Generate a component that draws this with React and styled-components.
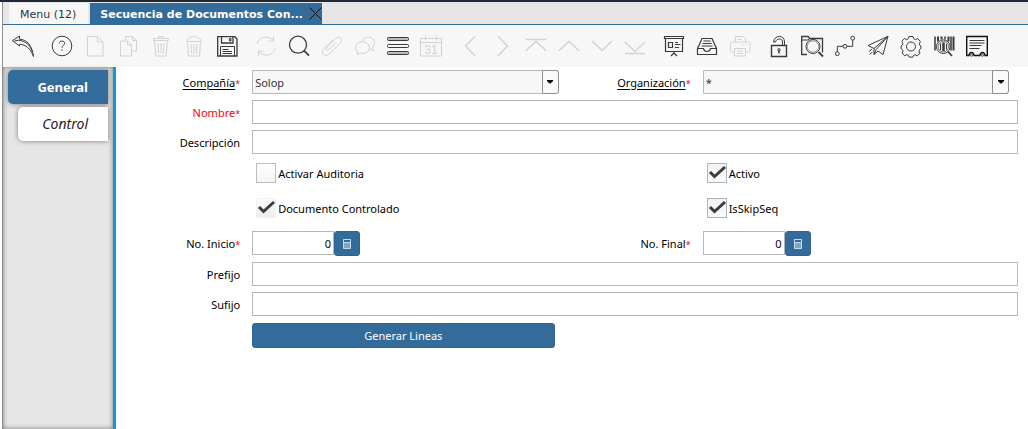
import React from "react";
import styled, { createGlobalStyle, css } from "styled-components";

const GlobalStyle = createGlobalStyle`
  *, *::before, *::after { box-sizing: border-box; }
  body {
    margin: 0;
    background: #fff;
    color: #000;
    font: 12px/16px "Noto Sans", "Open Sans", sans-serif;
  }
  button, input, select { margin: 0; font: inherit; color: inherit; }
`;

const blue = "#336b9b";
const line = "#b7b7b7";

const Page = styled.div`
  display: flex;
  flex-direction: column;
  min-height: 100vh;
  border-top: 2px solid #1f2936;
  padding-left: 2px;
`;

const Frame = styled.div`
  flex: 1;
  display: flex;
  flex-direction: column;
  border-left: 1px solid #8e8e8e;
`;

const TabBar = styled.nav`
  display: flex;
  gap: 2px;
  padding: 1px 6px 0;
  background: #e6e6e6;
  border-bottom: 1px solid ${blue};
  font: 11px/21px "DejaVu Sans", sans-serif;
`;

const WindowTab = styled.div`
  display: flex;
  align-items: center;
  height: 21px;
  padding: ${(p) => (p.$active ? "0 0 0 10px" : "0 12px 0 11px")};
  background: ${(p) => (p.$active ? blue : "#f7f7f7")};
`;

const TabButton = styled.button`
  border: 0;
  padding: 1px 0 0;
  background: none;
  white-space: nowrap;
  color: ${(p) => (p.$active ? "#fff" : "#333")};
  font-weight: ${(p) => (p.$active ? "bold" : "normal")};
`;

const CloseButton = styled.button`
  display: flex;
  margin-left: 6px;
  border: 0;
  padding: 0;
  background: none;
  color: #111;
`;

const Toolbar = styled.div`
  display: flex;
  gap: 6px;
  padding: 9px 3px 8px;
  background: #f7f7f7;
`;

const ToolGroup = styled.div`
  display: flex;
`;

const ToolButton = styled.button`
  display: flex;
  border: 0;
  padding: 0 4px;
  background: none;
  color: #3a3a3a;
  &:disabled { color: #d2d2d2; }
`;

const Body = styled.div`
  flex: 1;
  display: flex;
`;

const Sidebar = styled.nav`
  flex: none;
  display: flex;
  flex-direction: column;
  align-items: flex-end;
  gap: 3px;
  width: 113px;
  padding: 3px 5px;
  background: #e6e6e6;
  border-right: 3px solid #0a9bdc;
  box-shadow: inset 0 0 5px #777;
`;

const SideTab = styled.button`
  width: ${(p) => (p.$active ? "100px" : "90px")};
  height: 34px;
  border: 0;
  border-radius: 5px 0 0 5px;
  padding: 0 20px 0 0;
  text-align: right;
  font-size: ${(p) => (p.$active ? "13px" : "14px")};
  box-shadow: 0 0 5px #777;
  background: ${(p) => (p.$active ? blue : "#fff")};
  color: ${(p) => (p.$active ? "#fff" : "#222")};
  font-weight: ${(p) => (p.$active ? "bold" : "normal")};
  font-style: ${(p) => (p.$active ? "normal" : "italic")};
`;

const columns = css`
  display: grid;
  grid-template-columns: 15fr 35fr 15fr 35fr;
`;

const Form = styled.form`
  ${columns}
  flex: 1;
  align-content: start;
  align-items: center;
  row-gap: 6px;
  padding: 3px 10px 3px 1px;
  font-size: 11px;
`;

const Label = styled.label`
  padding: 2px 12px 0 0;
  text-align: right;
  white-space: nowrap;
  color: ${(p) => (p.$missing ? "#f00" : "#000")};
`;

const LabelText = styled.span`
  text-decoration: ${(p) => (p.$linked ? "underline" : "none")};
  text-underline-offset: 2px;
`;

const Star = styled.span`
  color: #f00;
  font-size: 9px;
`;

const TextBox = styled.input`
  grid-column: span 3;
  width: 100%;
  height: 24px;
  border: 1px solid ${line};
  padding: 0 4px;
  background: #fff;
`;

const Combo = styled.div`
  position: relative;
  margin-right: 9px;
`;

const Select = styled.select`
  display: block;
  appearance: none;
  width: 100%;
  height: 24px;
  border: 1px solid ${line};
  border-radius: 0 3px 3px 0;
  padding: 2px 20px 0 2px;
  background: #f7f7f7;
  color: #333;
`;

const ComboArrow = styled.span`
  position: absolute;
  top: 0;
  right: 0;
  display: flex;
  align-items: center;
  justify-content: center;
  width: 17px;
  height: 24px;
  border: 1px solid #8f8f8f;
  border-radius: 0 3px 3px 0;
  background: #fafafa;
  pointer-events: none;
`;

const CheckGroup = styled.div`
  ${columns}
  grid-column: 1 / -1;
  row-gap: 15px;
  padding: 3px 0 7px;
`;

const CheckLabel = styled.label`
  grid-column: ${(p) => (p.$right ? 4 : 2)};
  display: flex;
  align-items: center;
  gap: 2px;
  margin-left: 4px;
`;

const CheckText = styled.span`
  padding-top: 2px;
`;

const CheckBox = styled.span`
  display: grid;
  width: 20px;
  height: 20px;
  > * { grid-area: 1 / 1; }
  > svg { pointer-events: none; visibility: hidden; }
  > input:checked + svg { visibility: visible; }
`;

const CheckInput = styled.input`
  appearance: none;
  width: 20px;
  height: 20px;
  border: 1px solid #b9bcc0;
  background: linear-gradient(#fff, #f3f3f3);
  &:checked { border-color: #a9b5c0; background: linear-gradient(#f2f2f2, #fafafa); }
  &:disabled { border-color: #f2f2f2; background: linear-gradient(#fafafa, #ededed); }
`;

const NumberField = styled.div`
  display: flex;
  align-items: flex-start;
`;

const NumberBox = styled.input`
  width: 82px;
  height: 24px;
  border: 1px solid ${line};
  padding: 1px 2px 0 3px;
  text-align: right;
`;

const CalcButton = styled.button`
  display: flex;
  align-items: center;
  justify-content: center;
  width: 26px;
  height: 25px;
  border: 1px solid #2c6595;
  border-radius: 3px;
  padding: 0;
  background: ${blue};
  color: #c4dcef;
`;

const ActionButton = styled.button`
  grid-column: 2;
  height: 25px;
  margin: 1px 13px 0 0;
  border: 1px solid #2c6595;
  border-radius: 3px;
  padding: 0;
  background: ${blue};
  color: #fff;
`;

const icons = {
  undo: <path d="M2.500 6.700 9.500 2v3.200C17 5.400 22.400 12 23.500 22.500 20.700 15 16 10.500 9.500 10.300V12ZM4.500 7l4-.8C15.500 7 20 11 22.300 17.500" />,
  help: <><circle cx="13" cy="12" r="9.800" /><path d="M10.300 9.500C10.300 6.300 15.700 6.300 15.700 9.300 15.700 11.400 13 11.300 13 13.700M13 15.300v1.500" /></>,
  file: <path d="M5.500 2.500h10l5.500 5.500v14H5.500ZM15.500 2.500V8H21" />,
  copy: <path d="M10.500 6.500v-4h7l4 4v10.500h-5M17.500 2.500v4h4M5.500 7h7l4 4v11h-11ZM12.500 7v4h4" />,
  trash: <path d="M5.500 4.500h15v2h-15ZM10.500 4.500v-2h5v2M6.500 6.500 8 22h10l1.500-15.500M10 9l.7 10.500M13 9v10.500M16 9l-.7 10.500" />,
  trashFull: <path d="M6.500 7.500h13l-1 14.500h-11ZM6 7.500C5.500 5 7.500 4 9 4.500 10 2 12 1.500 13 3.500 15 1.500 17 3 17 4.500 19 4 20.500 5.500 20 7.500M10 10l.5 9.500M13 10v9.500M16 10l-.5 9.500" />,
  save: <><path strokeWidth="1.300" d="M3.700 2.700h17.200L23 5v17H3.700ZM7.500 3v6h11.500V3" /><path d="M15.500 4.500h1.500v2.500h-1.500ZM6.500 21.700v-9.200h14v9.200" /><path strokeWidth="1.200" d="M8.500 15.500h6M8.500 17.500h9.500M8.500 19.500h9.500" /></>,
  refresh: <path d="M4 10C5.500 3 15 .5 20.500 6.500M20.500 2.500v4.500h-5M22.500 14C20.500 21.500 11 23.500 5.500 17.500M5.500 22v-5h5" />,
  search: <><circle cx="12" cy="10.700" r="8.500" strokeWidth="1.300" /><path strokeWidth="1.700" d="m18 16.700 5 5" /></>,
  clip: <path d="M17.500 8 10 15.500C8 17.500 6 15.500 7.800 13.500L16.500 4.500C20 1 24.700 5.500 21.300 9L10.300 20C6 24.300 .8 19 4.800 14.700L13.500 6" />,
  chat: <path d="M10 7.500C11 1.500 22.500 1.500 22.500 8.500 22.500 11 21.500 12 20.500 13l1 3.500-4-2M3.500 13.500C3.500 6 17.500 6 17.500 13.500 17.500 18.500 12.500 20.500 8.500 19L5 20.500 5.800 17.500C4.300 16.500 3.500 15.500 3.500 13.500Z" />,
  bars: <><g fill="#bbb"><rect x="2.500" y="3.500" width="21" height="3" rx="1" /><rect x="2.500" y="17.500" width="21" height="3" rx="1" /></g><rect x="2.500" y="10.500" width="21" height="3" rx="1" /></>,
  calendar: <><path d="M2.500 4.500h21v17.500h-21ZM2.500 8.500h21M7.500 2v4.500M18.500 2v4.500" /><text x="13" y="20" textAnchor="middle" fontFamily="Liberation Sans, sans-serif" fontSize="12" fill="currentColor" stroke="none">31</text></>,
  left: <path strokeWidth="1.400" d="M18 2.300 8.500 12 18 21.700" />,
  right: <path strokeWidth="1.400" d="M8 2.300 17.500 12 8 21.700" />,
  first: <path strokeWidth="1.400" d="M3 5.500h20M3 16.700 13 7.200l10 9.500" />,
  up: <path strokeWidth="1.400" d="M3 16.700 13 7.200l10 9.500" />,
  down: <path strokeWidth="1.400" d="M3 7l10 9.500L23 7" />,
  last: <path strokeWidth="1.400" d="M3 8l10 9.500L23 8M3 19.500h20" />,
  board: <path d="M3.500 2.500h19v2h-19ZM4.500 4.500v13h17v-13M7.500 8.500h4v5h-4ZM14 8.500h3M14 10.500h5.500M14 13.500h4M13 17.500v2.500M13 19l-3 3M13 19l3 3" strokeWidth="1.200" />,
  inbox: <path strokeWidth="1.200" d="M3.500 14.500 8 4.500h10l4.500 10v6h-19ZM3.500 14.500h6C10 18.500 16 18.500 16.500 14.500h6M9.500 7h7M8.500 9.500h9M7.500 12h11" />,
  printer: <path d="M8.500 8V2.500h7.500l2.500 2.500v3M6.500 18h-1.500Q3.500 18 3.500 16.500v-7Q3.500 8 5 8h16.500q1.500 0 1.500 1.500v7q0 1.500-1.500 1.500h-2M7.500 14.500h11V22h-11ZM10 17h6M10 19.500h6M15.500 11h2M19.500 11h1M10.500 5.500h4" />,
  lock: <><path strokeWidth="1.400" d="M5.500 11.500h15v11h-15Z" /><path d="M7.500 8C8.500 .5 18.500 .5 18.500 8v3.500M9.500 8C10.500 4 16.500 4 16.500 8v3.500M7.500 8h2" /><circle cx="13" cy="15.800" r="1.200" /><path strokeWidth="1.500" d="M13 16.500v3" /></>,
  folderSearch: <><path strokeWidth="1.300" d="M8 20.500H2.700v-18h6.500l1.500 2H23.500v14" /><path d="M3 6h6l1.500-1.500" /><circle cx="14" cy="12.500" r="7" /><circle cx="14" cy="12.500" r="5.700" strokeWidth=".5" /><path strokeWidth="1.800" d="m19.500 18 4.500 4.500" /></>,
  flow: <><circle cx="5.300" cy="19.700" r="1.900" /><circle cx="13" cy="12.300" r="1.900" /><circle cx="20.700" cy="4.200" r="1.900" /><path d="M5.300 17.800v-5.500h5.800M14.900 12.300h5.800V6.100" /></>,
  plane: <path d="M3 11.500 23 2.300 18 20.500 13 17 9 20.500V14.500ZM9 14.500 23 2.300 11 15.700M11 15.700 9 20.500M4 17.500l3-2.500M4.500 20.500l3-2.500" />,
  gear: <><path d="M11 2.500h4l.8 2.300 1.700.8 2.300-1 2.600 2.900-1.100 2.300.6 1.600 1 .6v2.500l-1.300 1-.6 1.400 1 2.200-2.700 2.700-2.200-1.100-1.500.6-.8 1.800h-3.600l-.8-1.800-1.500-.6-2.200 1.100L4 19.100l1-2.200-.6-1.400-1.300-1V12l1.200-.8.6-1.600-1.100-2.300L6.500 4.600l2.200 1 1.500-.8Z" /><circle cx="13" cy="12.500" r="4.500" /></>,
  barcode: <><path strokeWidth="1.500" d="M4 2.500v14M14 2.500v3M20 2.500v14" /><path strokeWidth="2" d="M7 2.500v5M10.500 2.500v3M17.500 2.500v5M22.500 2.500v14" /><circle cx="12.300" cy="12.700" r="6.800" fill="#f7f7f7" /><circle cx="12.300" cy="12.700" r="5.200" strokeWidth=".7" /><path d="M9.500 9.500v6.500M15.500 10v5.500" /><path strokeWidth="2.500" d="M12.500 8.500v8.500" /><path strokeWidth="1.700" d="m17 17.500 4 4.500" /></>,
  report: <><path stroke="#111" strokeWidth="1.400" d="M2.700 2.500h20.600v19h-2.300C20.500 17.500 16.500 17.500 16 21.500h-6C9.500 17.500 5.500 17.500 5 21.500H2.700Z" /><circle cx="7.500" cy="21.300" r="1" /><circle cx="18.500" cy="21.300" r="1" /><path strokeWidth="1.200" d="M5.500 6.500h15M5.500 9h15M5.500 11.500h12M5.500 14.500h10" /></>,
};

const groups = [
  [["undo", "Deshacer", true]],
  [["help", "Ayuda", true], ["file", "Nuevo"], ["copy", "Copiar"], ["trash", "Borrar"], ["trashFull", "Borrar selección"], ["save", "Guardar", true]],
  [["refresh", "Refrescar"], ["search", "Buscar", true], ["clip", "Adjuntos"], ["chat", "Chat"], ["bars", "Vista", true], ["calendar", "Calendario"]],
  [["left", "Padre"], ["right", "Detalle"], ["first", "Primero"], ["up", "Anterior"], ["down", "Siguiente"], ["last", "Último"]],
  [["board", "Reporte", true], ["inbox", "Archivo", true], ["printer", "Imprimir"]],
  [["lock", "Bloquear", true], ["folderSearch", "Acercar", true], ["flow", "Flujo de trabajo", true], ["plane", "Solicitudes", true], ["gear", "Proceso", true], ["barcode", "Producto", true], ["report", "Formato", true]],
];

function Tool({ icon, name, enabled }) {
  return (
    <ToolButton type="button" aria-label={name} disabled={!enabled}>
      <svg width="25" height="25" viewBox="0 0 25 25" fill="none" stroke="currentColor">
        {icons[icon]}
      </svg>
    </ToolButton>
  );
}

function FieldLabel({ id, children, required, linked, missing }) {
  return (
    <Label htmlFor={id} $missing={missing}>
      <LabelText $linked={linked}>{children}</LabelText>
      {required && <Star>*</Star>}
    </Label>
  );
}

function ComboField({ id, label, value }) {
  return (
    <>
      <FieldLabel id={id} required linked>{label}</FieldLabel>
      <Combo>
        <Select id={id} defaultValue={value}>
          <option>{value}</option>
        </Select>
        <ComboArrow>
          <svg width="6" height="4" viewBox="0 0 6 4"><path d="M0 0h6v1L3.500 3.500h-1L0 1Z" /></svg>
        </ComboArrow>
      </Combo>
    </>
  );
}

function TextField({ id, label, ...rest }) {
  return (
    <>
      <FieldLabel id={id} {...rest}>{label}</FieldLabel>
      <TextBox id={id} type="text" />
    </>
  );
}

function Check({ label, right, ...rest }) {
  return (
    <CheckLabel $right={right}>
      <CheckBox>
        <CheckInput type="checkbox" {...rest} />
        <svg width="20" height="20" viewBox="0 0 20 20" fill="none" stroke="#3c3c3c" strokeWidth="3">
          <path d="M3 9 7.500 13.500 18 4" />
        </svg>
      </CheckBox>
      <CheckText>{label}</CheckText>
    </CheckLabel>
  );
}

function NumericField({ id, label }) {
  return (
    <>
      <FieldLabel id={id} required>{label}</FieldLabel>
      <NumberField>
        <NumberBox id={id} type="text" inputMode="numeric" defaultValue="0" />
        <CalcButton type="button" aria-label="Calculadora">
          <svg width="8" height="10" viewBox="0 0 8 10" fill="none" stroke="currentColor">
            <path fill="#7fa6c6" d="M.5 .5h7v9h-7Z" />
            <path fill={blue} d="M.5 .5h7v3h-7Z" />
          </svg>
        </CalcButton>
      </NumberField>
    </>
  );
}

export default function App() {
  return (
    <Page>
      <GlobalStyle />
      <Frame>
        <TabBar>
          <WindowTab>
            <TabButton type="button">Menu (12)</TabButton>
          </WindowTab>
          <WindowTab $active>
            <TabButton type="button" $active>Secuencia de Documentos Con...</TabButton>
            <CloseButton type="button" aria-label="Cerrar">
              <svg width="13" height="13" viewBox="0 0 13 13" stroke="currentColor">
                <path d="M.5 .5 12.500 12.500M12.500 .5 .5 12.500" />
              </svg>
            </CloseButton>
          </WindowTab>
        </TabBar>
        <Toolbar role="toolbar">
          {groups.map((group) => (
            <ToolGroup key={group[0][0]}>
              {group.map(([icon, name, enabled]) => (
                <Tool key={icon} icon={icon} name={name} enabled={enabled} />
              ))}
            </ToolGroup>
          ))}
        </Toolbar>
        <Body>
          <Sidebar>
            <SideTab type="button" $active>General</SideTab>
            <SideTab type="button">Control</SideTab>
          </Sidebar>
          <Form>
            <ComboField id="company" label="Compañía" value="Solop" />
            <ComboField id="organization" label="Organización" value="*" />
            <TextField id="name" label="Nombre" required missing />
            <TextField id="description" label="Descripción" />
            <CheckGroup>
              <Check label="Activar Auditoria" />
              <Check label="Activo" right defaultChecked />
              <Check label="Documento Controlado" defaultChecked disabled />
              <Check label="IsSkipSeq" right defaultChecked />
            </CheckGroup>
            <NumericField id="start" label="No. Inicio" />
            <NumericField id="end" label="No. Final" />
            <TextField id="prefix" label="Prefijo" />
            <TextField id="suffix" label="Sufijo" />
            <ActionButton type="button">Generar Lineas</ActionButton>
          </Form>
        </Body>
      </Frame>
    </Page>
  );
}
